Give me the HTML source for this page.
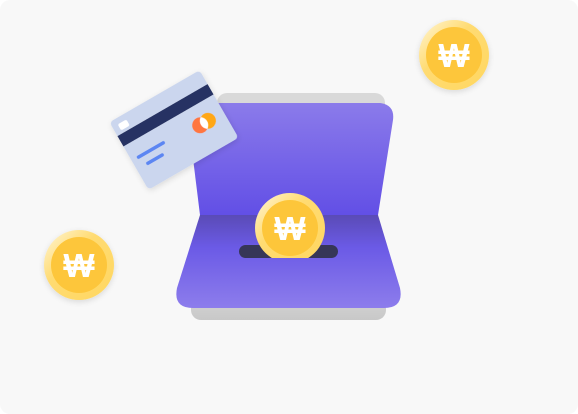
<!DOCTYPE html>
<html><head><meta charset="utf-8"><style>
html,body{margin:0;padding:0;background:#fff;}
.wrap{width:578px;height:414px;background:#f8f8f8;border-radius:10px;overflow:hidden;position:relative;}
svg{position:absolute;left:0;top:0;}
</style></head><body><div class="wrap">
<svg width="578" height="414" viewBox="0 0 578 414">
<defs>
<linearGradient id="back" x1="0" y1="0" x2="0" y2="1"><stop offset="0" stop-color="#8b7bea"/><stop offset="1" stop-color="#624fe6"/></linearGradient>
<linearGradient id="front" x1="0" y1="0" x2="0" y2="1"><stop offset="0" stop-color="#5a4bb6"/><stop offset="0.35" stop-color="#6b5ae6"/><stop offset="1" stop-color="#8d7dec"/></linearGradient>
<linearGradient id="gray" x1="0" y1="0" x2="0" y2="1"><stop offset="0" stop-color="#d8d8d8"/><stop offset="1" stop-color="#c8c8c8"/></linearGradient>
<linearGradient id="rim" x1="0" y1="0" x2="1" y2="1"><stop offset="0" stop-color="#fff6d8"/><stop offset="0.4" stop-color="#ffdb72"/><stop offset="1" stop-color="#ffd760"/></linearGradient>
<filter id="sh" x="-30%" y="-30%" width="160%" height="160%"><feDropShadow dx="0" dy="2" stdDeviation="3" flood-color="#000" flood-opacity="0.12"/></filter>
<clipPath id="slotclip"><rect x="200" y="150" width="200" height="108"/></clipPath>
</defs>
<rect x="217" y="93" width="168" height="40" rx="10" fill="#d9d9d9"/>
<rect x="191" y="290" width="195" height="30" rx="10" fill="url(#gray)"/>
<path d="M200 215 L188 118 Q187 103 202 103 L380 103 Q395 105 393 120 L378 215 Z" fill="url(#back)"/>
<path d="M200 215 L378 215 L400 288 Q404 308 384 308 L193 308 Q173 308 177 288 Z" fill="url(#front)"/>
<rect x="239" y="245" width="99" height="13" rx="6.5" fill="#363657"/>
<g clip-path="url(#slotclip)">
<circle cx="290" cy="228" r="35" fill="url(#rim)"/>
<circle cx="290" cy="228" r="28" fill="#fdc63a"/>
<text x="290" y="240" text-anchor="middle" font-family="Liberation Sans, DejaVu Sans, sans-serif" font-weight="bold" font-size="33" fill="#fff">₩</text>
</g>
<g transform="translate(174,130) rotate(-30)" filter="url(#sh)">
<rect x="-52" y="-39" width="104" height="78" rx="4" fill="#cbd6ee"/>
<rect x="-52" y="-23" width="104" height="12" fill="#253163"/>
<rect x="-46" y="-33" width="10" height="7" rx="2" fill="#fff"/>
<rect x="-46" y="4" width="32" height="3.5" rx="1.7" fill="#5b86f2"/>
<rect x="-41" y="14" width="20" height="3.5" rx="1.7" fill="#5b86f2"/>
<circle cx="25" cy="9" r="8" fill="#ff7640"/>
<circle cx="34" cy="9" r="8" fill="#ffa712"/>
<path d="M29.5 2.3 A8 8 0 0 1 29.5 15.7 A8 8 0 0 1 29.5 2.3Z" fill="#fff"/>
</g>
<g filter="url(#sh)">
<circle cx="454" cy="55" r="35" fill="url(#rim)"/>
<circle cx="454" cy="55" r="28" fill="#fdc63a"/>
<text x="454" y="67" text-anchor="middle" font-family="Liberation Sans, DejaVu Sans, sans-serif" font-weight="bold" font-size="33" fill="#fff">₩</text>
</g>
<g filter="url(#sh)">
<circle cx="79" cy="265" r="35" fill="url(#rim)"/>
<circle cx="79" cy="265" r="28" fill="#fdc63a"/>
<text x="79" y="277" text-anchor="middle" font-family="Liberation Sans, DejaVu Sans, sans-serif" font-weight="bold" font-size="33" fill="#fff">₩</text>
</g>
</svg>
</div></body></html>
